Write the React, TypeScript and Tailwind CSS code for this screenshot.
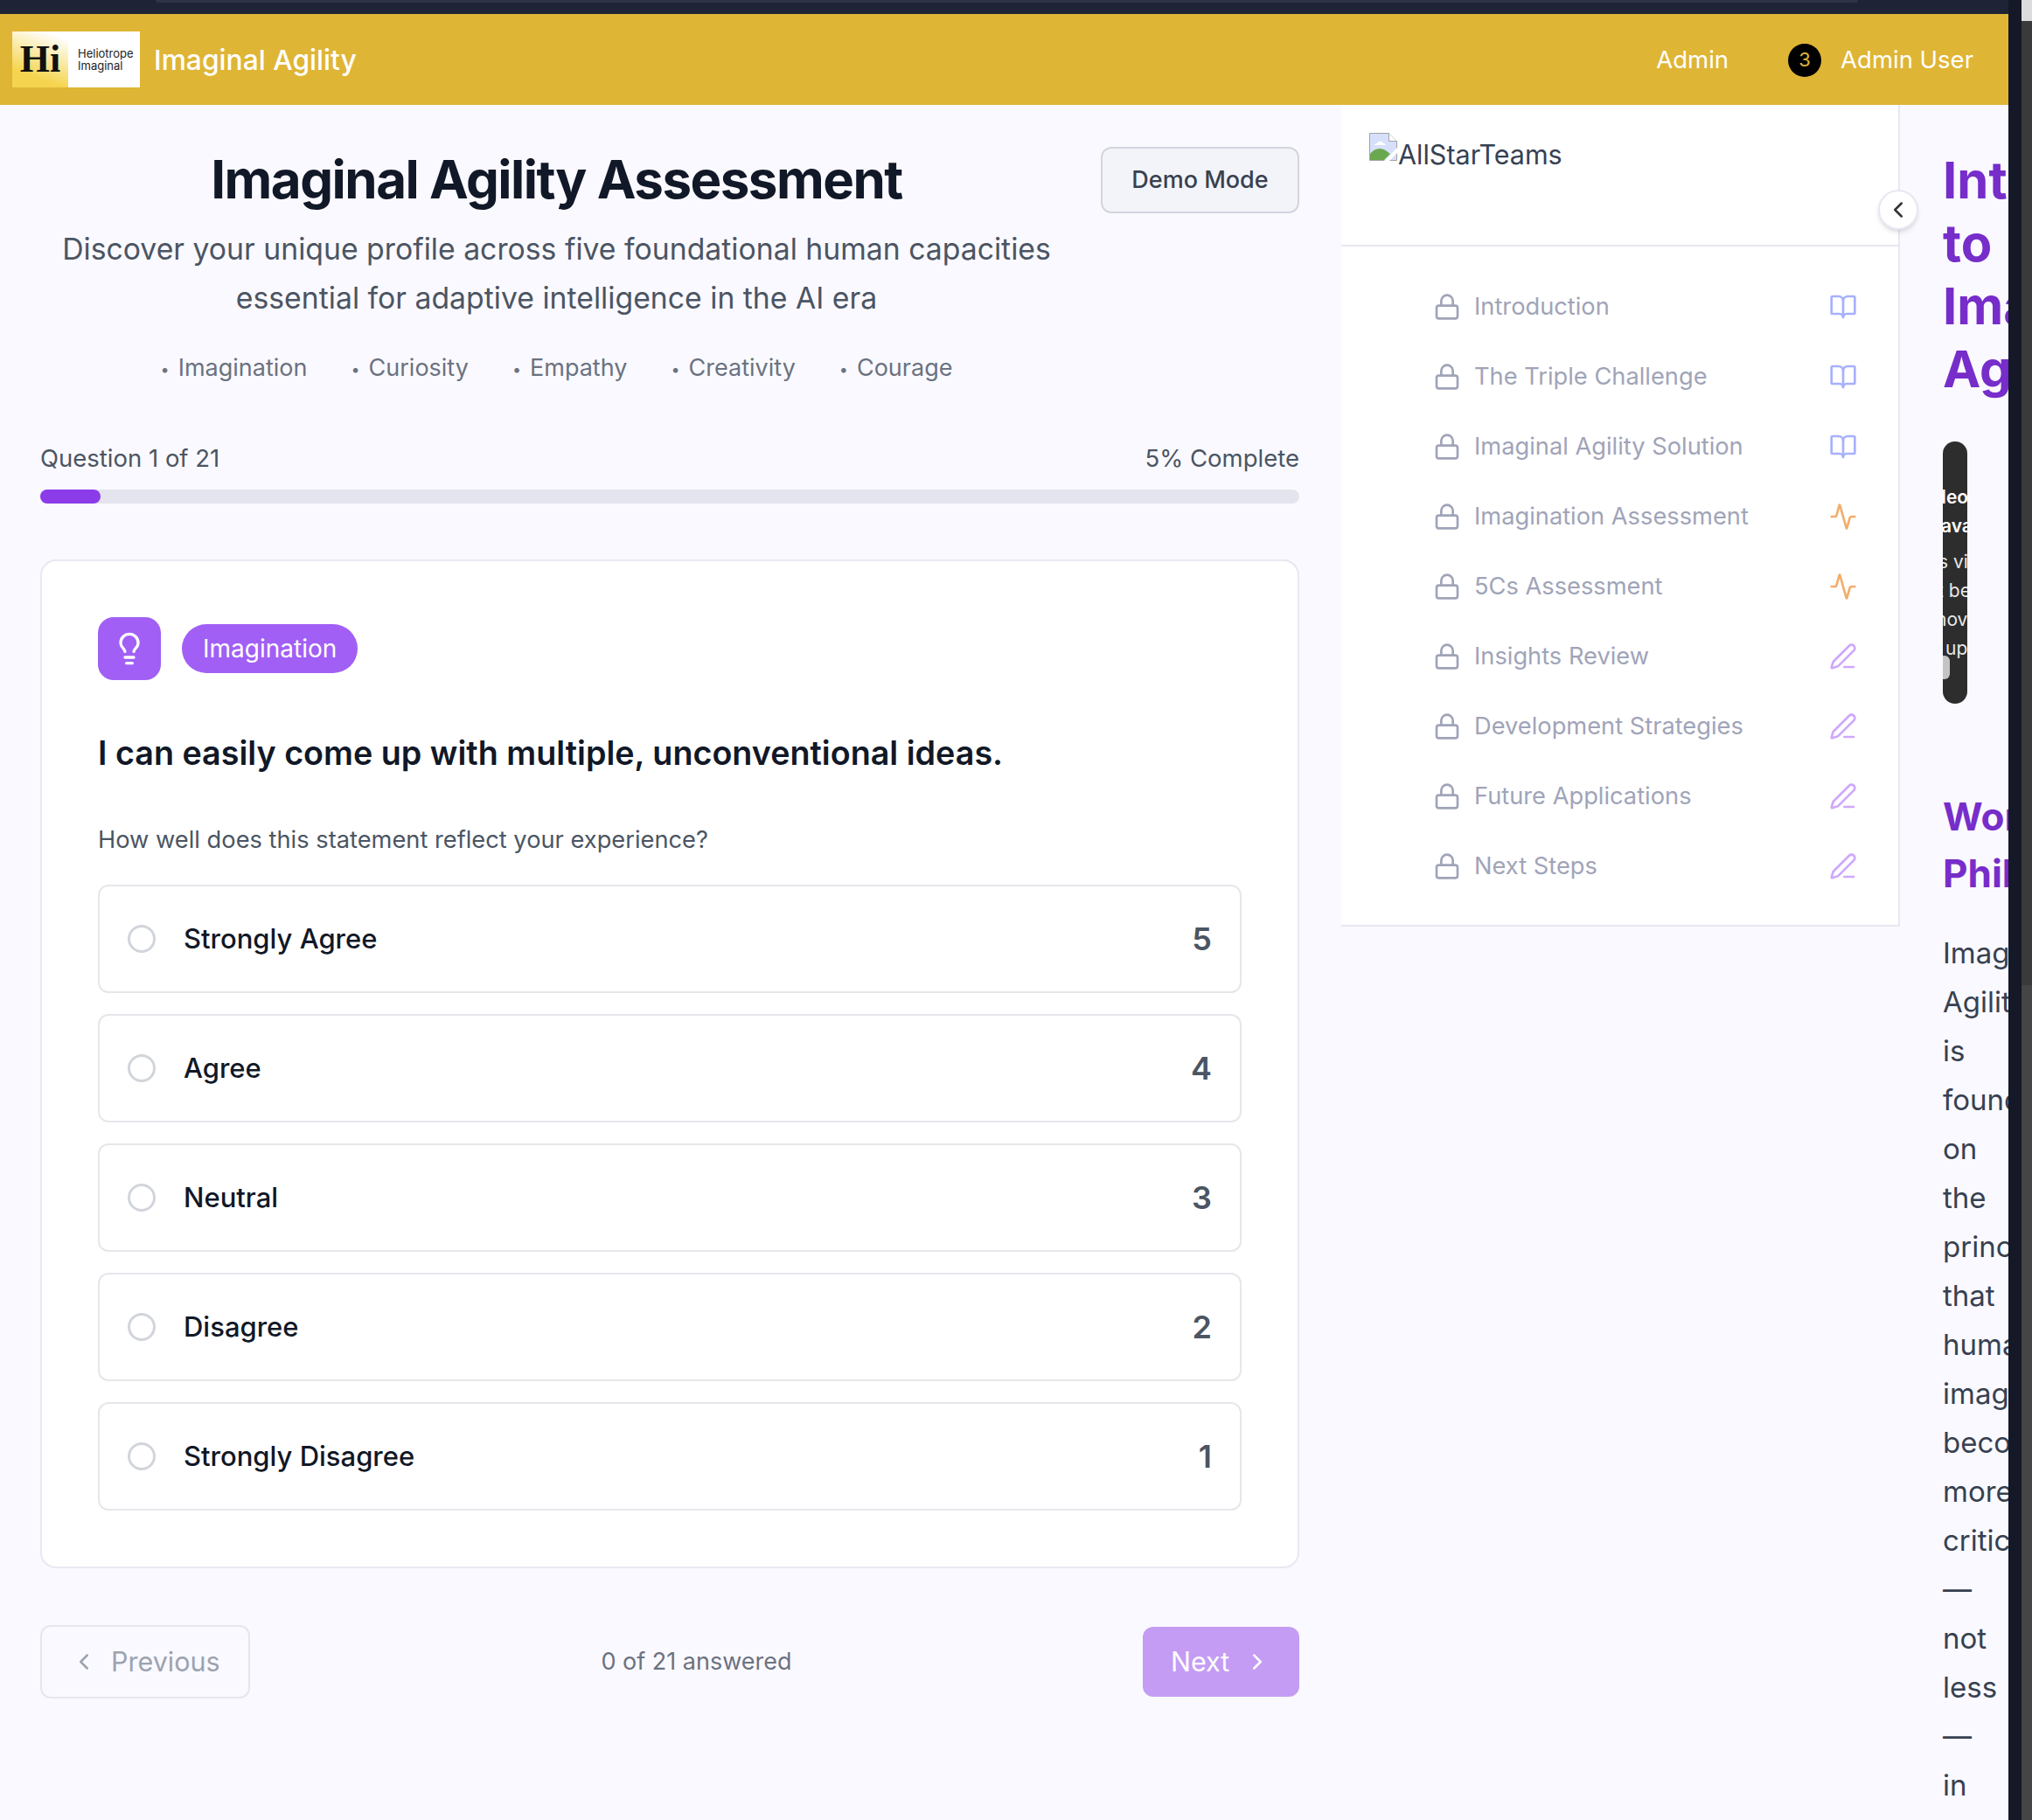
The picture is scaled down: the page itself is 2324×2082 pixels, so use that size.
import React from 'react';
import { Activity, BookOpen, ChevronLeft, ChevronRight, Lightbulb, Lock, PenLine } from 'lucide-react';

const capacities = ['Imagination', 'Curiosity', 'Empathy', 'Creativity', 'Courage'];

const answers = [
  { label: 'Strongly Agree', value: 5 },
  { label: 'Agree', value: 4 },
  { label: 'Neutral', value: 3 },
  { label: 'Disagree', value: 2 },
  { label: 'Strongly Disagree', value: 1 },
];

const modules = [
  { label: 'Introduction', kind: 'book' },
  { label: 'The Triple Challenge', kind: 'book' },
  { label: 'Imaginal Agility Solution', kind: 'book' },
  { label: 'Imagination Assessment', kind: 'activity' },
  { label: '5Cs Assessment', kind: 'activity' },
  { label: 'Insights Review', kind: 'pen' },
  { label: 'Development Strategies', kind: 'pen' },
  { label: 'Future Applications', kind: 'pen' },
  { label: 'Next Steps', kind: 'pen' },
];

const articleWords = ['Imaginal', 'Agility', 'is', 'founded', 'on', 'the', 'principle', 'that', 'human', 'imagination', 'becomes', 'more', 'critical', '—', 'not', 'less', '—', 'in'];

const ModuleIcon = ({ kind }: { kind: string }) => {
  if (kind === 'book') return <BookOpen className="w-8 h-8 text-[#a8b0fc]" strokeWidth={2} />;
  if (kind === 'activity') return <Activity className="w-8 h-8 text-[#f2ad6b]" strokeWidth={2} />;
  return <PenLine className="w-8 h-8 text-[#cfa8fc]" strokeWidth={2} />;
};

const BrokenImage = () => (
  <svg width="32" height="32" viewBox="0 0 32 32" className="shrink-0">
    <path d="M0.5 0.5H22.5L31.5 9.5V31.5H0.5Z" fill="#d6e0fa" stroke="#a3a3a3" />
    <path d="M22.5 0.5V9.5H31.5" fill="#fff" stroke="#a3a3a3" />
    <path d="M9 12c1-3 6-3 7 0 2 0 3 1 3 2H6c0-1 1-2 3-2Z" fill="#fff" />
    <path d="M1 31v-7c5-7 13-8 19-3l4 3-7 7Z" fill="#6aa84f" />
    <path d="M17 32l15-15v6l-9 9Z" fill="#fff" />
  </svg>
);

const App = () => {
  return (
    <div className="flex w-[2324px] h-[2082px] overflow-hidden bg-[#141827] font-['Inter',sans-serif]">
      <div className="flex flex-col w-[2297px] shrink-0 h-full">
        {/* browser strip */}
        <div className="h-4 bg-[#1e2336] shrink-0">
          <div className="ml-[178px] mr-[172px] h-[3px] bg-[#2e3348] rounded-bl-md rounded-br-md" />
        </div>

        {/* top bar */}
        <header className="h-[104px] shrink-0 bg-[#dfb535] flex items-center pl-[14px] pr-[40px]">
          <div className="flex w-[146px] h-16 bg-white">
            <div className="w-[64px] h-16 flex items-center justify-center bg-[linear-gradient(20deg,#f5d550_25%,#fff_90%)]">
              <span className="font-['Liberation_Serif',serif] font-bold text-[44px] leading-none text-[#111]">Hi</span>
            </div>
            <div className="flex flex-col justify-center pl-[11px] text-[13px] leading-[14px] text-[#222]">
              <span>Heliotrope</span>
              <span>Imaginal</span>
            </div>
          </div>
          <span className="ml-4 mt-[1px] text-[31.75px] font-medium text-white">Imaginal Agility</span>
          <div className="ml-auto mt-[1px] flex items-center">
            <span className="text-[27.5px] text-white">Admin</span>
            <span className="ml-[68px] w-[38px] h-[38px] rounded-full bg-black text-[#dfb535] text-[22px] flex items-center justify-center">3</span>
            <span className="ml-[22px] text-[27.5px] text-white">Admin User</span>
          </div>
        </header>

        <div className="flex flex-1 min-h-0">
          {/* assessment */}
          <main className="w-[1534px] shrink-0 bg-[#faf9ff] pl-[46px] pr-[48px] pt-[48px]">
            <div className="flex items-start">
              <div className="flex-1 flex flex-col items-center pr-[32px]">
                <h1 className="text-[60px] leading-[75px] font-bold text-[#111827] tracking-tight">Imaginal Agility Assessment</h1>
                <p className="mt-[14px] text-[33.75px] leading-[56px] text-[#4b5563] text-center">
                  Discover your unique profile across five foundational human capacities
                  <br />
                  essential for adaptive intelligence in the AI era
                </p>
                <div className="mt-[32px] flex gap-[50px] text-[27px] text-[#6b7280]">
                  {capacities.map((c) => (
                    <span key={c}>
                      <span className="text-[18px] mr-[10px] align-middle">•</span>
                      {c}
                    </span>
                  ))}
                </div>
              </div>
              <div className="w-[227px] h-[76px] shrink-0 rounded-[12px] border-2 border-[#d4d4e0] bg-[#f3f4f9] flex items-center justify-center text-[27px] font-medium text-[#374151]">
                Demo Mode
              </div>
            </div>

            {/* progress */}
            <div className="mt-[62px] flex justify-between text-[27.5px] text-[#4b5563]">
              <span>Question 1 of 21</span>
              <span>5% Complete</span>
            </div>
            <div className="mt-[15px] h-4 rounded-full bg-[#e4e4ee]">
              <div className="h-full w-[69px] rounded-full bg-[#8b3be8]" />
            </div>

            {/* question */}
            <section className="mt-[64px] h-[1154px] rounded-[18px] border-2 border-[#e9e8f2] bg-white p-[64px]">
              <div className="flex items-center gap-6">
                <div className="w-[72px] h-[72px] rounded-[18px] bg-[#a15ff6] flex items-center justify-center">
                  <Lightbulb className="w-10 h-10 text-white" />
                </div>
                <span className="h-14 px-6 pt-[1px] rounded-full bg-[#a15ff6] text-white text-[28px] flex items-center">Imagination</span>
              </div>
              <h2 className="mt-[56px] text-[37.7px] leading-[54px] font-semibold text-[#111827]">I can easily come up with multiple, unconventional ideas.</h2>
              <p className="mt-[52px] text-[27.25px] leading-[42px] text-[#4b5563]">How well does this statement reflect your experience?</p>
              <div className="mt-[30px] flex flex-col gap-6">
                {answers.map((a) => (
                  <div key={a.label} className="h-[124px] rounded-[12px] border-2 border-[#e5e7eb] flex items-center pl-[32px] pr-[32px]">
                    <span className="w-[32px] h-[32px] rounded-full border-[3px] border-[#d1d5db]" />
                    <span className="ml-[32px] text-[31px] font-medium text-[#111827]">{a.label}</span>
                    <span className="ml-auto text-[36px] font-semibold text-[#4b5563]">{a.value}</span>
                  </div>
                ))}
              </div>
            </section>

            {/* footer nav */}
            <div className="mt-[65px] flex items-center justify-between">
              <div className="w-[240px] h-[84px] rounded-[12px] border-2 border-[#e5e7eb] flex items-center pl-[33px] text-[30.5px] text-[#9ca3af]">
                <ChevronLeft className="w-[30px] h-[30px]" />
                <span className="ml-[16px]">Previous</span>
              </div>
              <span className="text-[27px] text-[#6b7280]">0 of 21 answered</span>
              <div className="w-[179px] h-[80px] rounded-[12px] bg-[#c49cf3] flex items-center pl-[32px] text-[30.5px] text-white">
                <span>Next</span>
                <ChevronRight className="ml-[17px] w-[30px] h-[30px]" />
              </div>
            </div>
          </main>

          {/* module sidebar */}
          <div className="w-[639px] shrink-0 bg-[#faf9ff]">
            <aside className="relative h-[940px] bg-white border-r-2 border-b-2 border-[#e8e7f2]">
              <div className="h-[162px] border-b-2 border-[#e8e7f2] pl-[32px] pt-[32px] flex items-start">
                <BrokenImage />
                <span className="ml-[1px] mt-[3px] text-[30.5px] leading-[44px] text-[#374151]">AllStarTeams</span>
              </div>
              <nav className="pt-[29px] pl-[105px] pr-[47px]">
                {modules.map((m) => (
                  <div key={m.label} className="h-20 flex items-center justify-between">
                    <div className="flex items-center">
                      <Lock className="w-8 h-8 text-[#a0a4b8]" strokeWidth={2} />
                      <span className="ml-[15px] text-[27.25px] text-[#a0a4b8]">{m.label}</span>
                    </div>
                    <ModuleIcon kind={m.kind} />
                  </div>
                ))}
              </nav>
              <button className="absolute top-[97px] -right-[23px] w-[46px] h-[46px] rounded-full bg-white border-2 border-[#e8e7f2] shadow-md flex items-center justify-center text-[#333]">
                <ChevronLeft className="w-[30px] h-[30px]" />
              </button>
            </aside>
          </div>

          {/* clipped article */}
          <article className="flex-1 min-w-0 overflow-hidden bg-[#faf9ff] pl-[49px] pt-[50px]">
            <h1 className="w-[300px] text-[58px] leading-[72px] font-bold text-[#772dc9]">
              Intro
              <br />
              to
              <br />
              Imaginal
              <br />
              Agility
            </h1>
            <div className="mt-[47px] w-[28px] h-[300px] rounded-[14px] bg-[#2d2d2d] overflow-hidden text-white whitespace-nowrap pt-[47px] text-[21px] leading-[33px]">
              <div className="-ml-[30px] font-semibold">Video</div>
              <div className="-ml-[2px] font-semibold">available</div>
              <div className="-ml-[5px] mt-[8px] text-[#e8e8e8]">s video</div>
              <div className="-ml-[6px] text-[#e8e8e8]">t be</div>
              <div className="-ml-[14px] text-[#e8e8e8]">moved</div>
              <div className="ml-[3px] text-[#e8e8e8]">upload</div>
              <div className="-mt-[8px] w-[8px] h-[27px] rounded-r-md bg-[#c4c4c4]" />
            </div>
            <h2 className="mt-[97px] w-[400px] text-[44px] leading-[65px] font-bold text-[#772dc9]">
              Working
              <br />
              Philosophy
            </h2>
            <div className="mt-[30px] w-[300px] text-[33px] leading-[56px] text-[#374151]">
              {articleWords.map((w, i) => (
                <div key={i}>{w}</div>
              ))}
            </div>
          </article>
        </div>
      </div>
      <div className="w-[15px] shrink-0 bg-[#141827]" />
      <div className="w-3 shrink-0 flex flex-col bg-[#454545]">
        <div className="h-6 bg-[#dcdcdc]" />
        <div className="h-[1103px] bg-[#3a3a3a]" />
      </div>
    </div>
  );
};

export default App;
